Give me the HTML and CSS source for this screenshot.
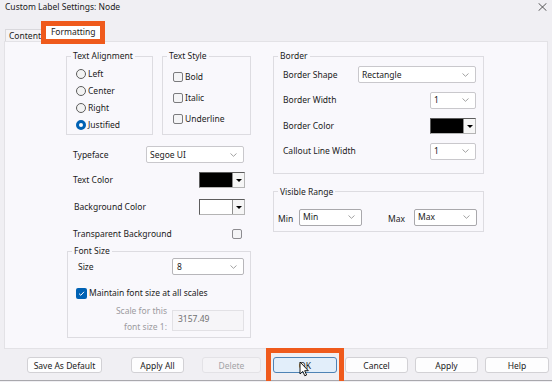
FILE: index.html
```html
<!DOCTYPE html>
<html lang="en">
  <head>
    <meta charset="UTF-8" />
    <meta name="viewport" content="width=device-width, initial-scale=1.0" />
    <title>Custom Label Settings: Node</title>
    <link rel="stylesheet" href="styles.css">
  </head>
  <body>
    <div class="dialog">
      <div class="title-bar">
        <span class="title">Custom Label Settings: Node</span>
        <svg class="close-icon" width="9" height="8" viewBox="0 0 9 8">
          <path d="M0.5 0.2 L8.5 7.8 M8.5 0.2 L0.5 7.8" stroke="#444" stroke-width="0.9" fill="none" />
        </svg>
      </div>

      <div class="tabs">
        <span class="tab">Content</span>
        <span class="tab tab-active">Formatting</span>
      </div>

      <div class="panel">
        <div class="left-col">
          <div class="style-row">
            <fieldset class="group group-align">
              <legend>Text Alignment</legend>
              <label class="radio-row"><span class="radio"></span>Left</label>
              <label class="radio-row"><span class="radio"></span>Center</label>
              <label class="radio-row"><span class="radio"></span>Right</label>
              <label class="radio-row"><span class="radio checked"></span>Justified</label>
            </fieldset>
            <fieldset class="group group-style">
              <legend>Text Style</legend>
              <label class="check-row"><span class="checkbox"></span>Bold</label>
              <label class="check-row"><span class="checkbox"></span>Italic</label>
              <label class="check-row"><span class="checkbox"></span>Underline</label>
            </fieldset>
          </div>

          <div class="field-row typeface-row">
            <span>Typeface</span>
            <div class="select select-typeface">
              <span>Segoe UI</span>
              <svg class="chevron" width="7" height="4" viewBox="0 0 7 4"><path d="M0.5 0.5 L3.5 3.3 L6.5 0.5" stroke="#8a8a8a" fill="none" stroke-width="0.8" /></svg>
            </div>
          </div>

          <div class="field-row color-row text-color-row">
            <span>Text Color</span>
            <div class="color-pick">
              <span class="swatch swatch-black"></span>
              <span class="color-arrow"></span>
            </div>
          </div>

          <div class="field-row color-row bg-color-row">
            <span>Background Color</span>
            <div class="color-pick">
              <span class="swatch swatch-white"></span>
              <span class="color-arrow"></span>
            </div>
          </div>

          <div class="field-row transparent-row">
            <span>Transparent Background</span>
            <span class="checkbox checkbox-round"></span>
          </div>

          <fieldset class="group group-font">
            <legend>Font Size</legend>
            <div class="field-row size-row">
              <span>Size</span>
              <div class="select select-size">
                <span>8</span>
                <svg class="chevron" width="7" height="4" viewBox="0 0 7 4"><path d="M0.5 0.5 L3.5 3.3 L6.5 0.5" stroke="#8a8a8a" fill="none" stroke-width="0.8" /></svg>
              </div>
            </div>
            <label class="maintain-row">
              <span class="checkbox checked">
                <svg width="9" height="9" viewBox="0 0 9 9"><path d="M2 4.6 L3.8 6.3 L7 2.8" stroke="#fff" stroke-width="1" fill="none" /></svg>
              </span>
              Maintain font size at all scales
            </label>
            <div class="scale-row">
              <span class="scale-label">Scale for this<br />font size 1:</span>
              <span class="scale-input">3157.49</span>
            </div>
          </fieldset>
        </div>

        <div class="right-col">
          <fieldset class="group group-border">
            <legend>Border</legend>
            <div class="field-row">
              <span>Border Shape</span>
              <div class="select select-shape">
                <span>Rectangle</span>
                <svg class="chevron" width="7" height="4" viewBox="0 0 7 4"><path d="M0.5 0.5 L3.5 3.3 L6.5 0.5" stroke="#8a8a8a" fill="none" stroke-width="0.8" /></svg>
              </div>
            </div>
            <div class="field-row">
              <span>Border Width</span>
              <div class="select select-small">
                <span>1</span>
                <svg class="chevron" width="7" height="4" viewBox="0 0 7 4"><path d="M0.5 0.5 L3.5 3.3 L6.5 0.5" stroke="#8a8a8a" fill="none" stroke-width="0.8" /></svg>
              </div>
            </div>
            <div class="field-row">
              <span>Border Color</span>
              <div class="color-pick">
                <span class="swatch swatch-black"></span>
                <span class="color-arrow"></span>
              </div>
            </div>
            <div class="field-row">
              <span>Callout Line Width</span>
              <div class="select select-small">
                <span>1</span>
                <svg class="chevron" width="7" height="4" viewBox="0 0 7 4"><path d="M0.5 0.5 L3.5 3.3 L6.5 0.5" stroke="#8a8a8a" fill="none" stroke-width="0.8" /></svg>
              </div>
            </div>
          </fieldset>

          <fieldset class="group group-range">
            <legend>Visible Range</legend>
            <div class="range-row">
              <span class="range-label">Min</span>
              <div class="select select-range">
                <span>Min</span>
                <svg class="chevron" width="7" height="4" viewBox="0 0 7 4"><path d="M0.5 0.5 L3.5 3.3 L6.5 0.5" stroke="#8a8a8a" fill="none" stroke-width="0.8" /></svg>
              </div>
              <span class="range-label range-label-max">Max</span>
              <div class="select select-range">
                <span>Max</span>
                <svg class="chevron" width="7" height="4" viewBox="0 0 7 4"><path d="M0.5 0.5 L3.5 3.3 L6.5 0.5" stroke="#8a8a8a" fill="none" stroke-width="0.8" /></svg>
              </div>
            </div>
          </fieldset>
        </div>
      </div>

      <div class="buttons">
        <button class="btn btn-save">Save As Default</button>
        <button class="btn btn-apply-all">Apply All</button>
        <button class="btn btn-delete" disabled>Delete</button>
        <button class="btn btn-ok">
          OK
          <svg class="cursor" width="10" height="16" viewBox="0 0 10 16">
            <path d="M1 1 L1 13 L3.8 10.4 L5.8 14.8 L7.6 14 L5.7 9.7 L9.3 9.7 Z" fill="#fff" stroke="#000" stroke-width="0.9" stroke-linejoin="round" />
          </svg>
        </button>
        <button class="btn btn-cancel">Cancel</button>
        <button class="btn btn-apply">Apply</button>
        <button class="btn btn-help">Help</button>
      </div>
    </div>
  </body>
</html>
```

FILE: styles.css
```css
:root {
  --window-bg: #f0eff3;
  --panel-bg: #f9f8fc;
  --group-border: #dddce1;
  --field-border: #c9c8cc;
  --text-color: #1b1b1b;
  --accent-blue: #0062b4;
  --highlight: #ef5a1c;
}

* {
  box-sizing: border-box;
}

body {
  margin: 0;
  padding: 0;
  overflow: hidden;
  background-color: var(--window-bg);
  color: var(--text-color);
  font-family: "Noto Sans", "Open Sans", sans-serif;
  font-size: 8.5px;
  line-height: 12px;
}

.dialog {
  width: 552px;
  height: 381px;
  border-bottom: 1px solid #a9a8ad;
}

/* title */
.title-bar {
  height: 18px;
  display: flex;
  align-items: flex-start;
  justify-content: space-between;
  padding: 1px 5px 0 5px;
}

.title {
  line-height: 12px;
}

.close-icon {
  margin-top: 2px;
}

/* tabs */
.tabs {
  height: 23px;
  display: flex;
  align-items: flex-end;
  padding-left: 5px;
}

.tab {
  height: 12px;
  padding: 0 3px 0 3px;
  margin-right: -4px;
  border: 1px solid #d9d8dc;
  border-bottom: none;
  background-color: #f4f3f6;
  line-height: 11px;
}

.tab-active {
  position: relative;
  z-index: 1;
  width: 64px;
  height: 23px;
  margin-bottom: -3px;
  padding: 0 0 0 5px;
  border: 5px solid var(--highlight);
  background-color: #fff;
  line-height: 12px;
}

/* main panel */
.panel {
  height: 308px;
  margin: 0 4px;
  padding: 8px 0 0 61px;
  display: flex;
  align-items: flex-start;
  background-color: var(--panel-bg);
  border: 1px solid #e3e2e6;
}

.left-col {
  width: 186px;
  display: flex;
  flex-direction: column;
}

.right-col {
  width: 211px;
  margin-left: 21px;
  display: flex;
  flex-direction: column;
}

.group {
  margin: 0;
  min-width: 0;
  border: 1px solid var(--group-border);
}

.group legend {
  padding: 0 2px;
  line-height: 12px;
}

.style-row {
  display: flex;
  gap: 9px;
}

.group-align {
  width: 87px;
  padding: 3px 0 1px 9px;
}

.group-align legend {
  margin-left: -5px;
}

.group-style {
  width: 89px;
  padding: 4px 0 0 10px;
}

.group-style legend {
  margin-left: -6px;
}

.radio-row {
  height: 17px;
  display: flex;
  align-items: center;
  gap: 2px;
}

.radio {
  width: 10px;
  height: 10px;
  border-radius: 50%;
  border: 1px solid #5c5c5c;
  background-color: #f3f3f3;
}

.radio.checked {
  border: 3px solid var(--accent-blue);
  background-color: #fff;
}

.check-row {
  height: 21px;
  display: flex;
  align-items: center;
  gap: 2px;
}

.checkbox {
  width: 10px;
  height: 10px;
  border: 1px solid #7b7b7e;
  border-radius: 2px;
  background-color: #f4f4f6;
}

.checkbox-round {
  border-color: #8d8c90;
}

.checkbox.checked {
  width: 11px;
  height: 11px;
  display: flex;
  align-items: center;
  justify-content: center;
  border: none;
  background-color: var(--accent-blue);
}

/* label + control rows */
.field-row {
  display: flex;
  align-items: center;
  justify-content: space-between;
}

.typeface-row {
  height: 17px;
  margin-top: 11px;
  padding: 0 8px 0 7px;
}

.color-row {
  height: 16px;
  padding: 0 7px 0 7px;
}

.text-color-row {
  margin-top: 9px;
}

.bg-color-row {
  margin-top: 11px;
  padding-left: 8px;
}

.transparent-row {
  height: 12px;
  margin-top: 13px;
  padding: 0 10px 0 7px;
}

.select {
  height: 17px;
  display: flex;
  align-items: center;
  justify-content: space-between;
  padding: 0 6px 0 3px;
  background-color: #fff;
  border: 1px solid var(--field-border);
  border-radius: 2px;
}

.select-typeface {
  width: 98px;
}

.select-size {
  width: 72px;
  border-color: #b7b6ba;
}

.select-shape {
  width: 118px;
}

.select-small {
  width: 46px;
}

.select-range {
  width: 63px;
  border-color: #a9a8ac;
}

.color-pick {
  width: 46px;
  height: 16px;
  display: flex;
  border: 1px solid;
  border-color: #5d5d5d #b4b4b4 #b4b4b4 #5d5d5d;
  background-color: #fff;
}

.swatch {
  flex: 1;
}

.swatch-black {
  background-color: #000;
}

.swatch-white {
  background-color: #fff;
}

.color-arrow {
  width: 12px;
  position: relative;
  border-left: 1px solid #8e8e8e;
  background-color: #f6f6f6;
}

.color-arrow::after {
  content: "";
  position: absolute;
  left: 3px;
  top: 6px;
  border-left: 3px solid transparent;
  border-right: 3px solid transparent;
  border-top: 3px solid #000;
}

/* font size group */
.group-font {
  width: 184px;
  margin: 5px 0 0 1px;
  padding: 1px 6px 2px 10px;
}

.group-font legend {
  margin-left: -6px;
}

.size-row {
  height: 17px;
}

.select-size span {
  padding-left: 1px;
}

.maintain-row {
  height: 12px;
  margin: 12px 0 0 -2px;
  display: flex;
  align-items: center;
  gap: 2px;
}

.scale-row {
  margin-top: 4px;
  display: flex;
  justify-content: flex-end;
  align-items: flex-start;
  gap: 5px;
}

.scale-label {
  text-align: right;
  line-height: 16px;
  color: #9c9b9f;
}

.scale-input {
  width: 72px;
  height: 21px;
  margin-top: 7px;
  padding: 2px 0 0 5px;
  color: #707070;
  background-color: #f6f5f8;
  border: 1px solid #e2e1e5;
}

/* right column groups */
.group-border {
  padding: 4px 7px 13px 9px;
  display: flex;
  flex-direction: column;
  gap: 8.5px;
}

.group-border legend {
  margin-left: -5px;
}

.group-border .field-row {
  height: 17px;
}

.group-range {
  margin-top: 12px;
  padding: 11px 0 5px 4px;
}

.group-range legend {
  margin-left: 0;
}

.range-row {
  display: flex;
  align-items: flex-end;
}

.range-label {
  width: 21px;
  line-height: 14px;
}

.range-label-max {
  width: 26px;
  margin-left: 26px;
}

/* bottom buttons */
.buttons {
  margin-top: 8px;
  padding-left: 27px;
  display: flex;
}

.btn {
  height: 16px;
  padding: 0;
  font-family: inherit;
  font-size: 8.5px;
  color: var(--text-color);
  background-color: #fdfdfe;
  border: 1px solid #d2d1d5;
  border-radius: 3px;
}

.btn-save {
  width: 75px;
}

.btn-apply-all {
  width: 53px;
  margin-left: 29px;
}

.btn-delete {
  width: 59px;
  margin-left: 18px;
  color: #a3a3a6;
  background-color: #f4f3f6;
  border-color: #e3e2e6;
}

.btn-ok {
  position: relative;
  width: 64px;
  margin-left: 12px;
  background-color: #e2eefa;
  border-color: #4f83b5;
}

.btn-ok::after {
  content: "";
  position: absolute;
  left: -8px;
  right: -8px;
  top: -10px;
  bottom: -14px;
  border: 5px solid var(--highlight);
}

.cursor {
  position: absolute;
  left: 25px;
  top: 3px;
}

.btn-cancel {
  width: 63px;
  margin-left: 8px;
}

.btn-apply {
  width: 63px;
  margin-left: 7px;
}

.btn-help {
  width: 64px;
  margin-left: 7px;
}
```
